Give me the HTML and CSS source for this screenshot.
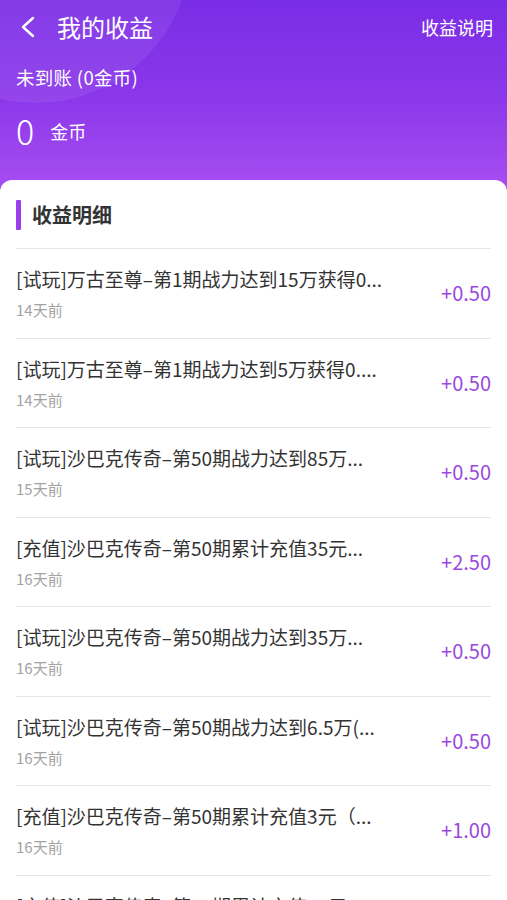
FILE: index.html
```html
<!DOCTYPE html>
<html lang="zh-CN">
<head>
    <meta charset="UTF-8">
    <meta name="viewport" content="width=device-width, initial-scale=1.0">
    <title>我的收益</title>
    <link rel="stylesheet" href="styles.css">
</head>
<body>
    <div id="header">
        <div class="bubble"></div>
        <div class="nav">
            <svg class="back" width="16" height="22" viewBox="0 0 16 22">
                <polyline points="13,2 3,11 13,20" fill="none" stroke="#fff" stroke-width="2.4" stroke-linecap="round" stroke-linejoin="round"/>
            </svg>
            <span class="nav-title">我的收益</span>
            <span class="nav-link">收益说明</span>
        </div>
        <div class="pending">未到账 (0金币)</div>
        <div class="balance">
            <span class="balance-num">0</span>
            <span class="balance-unit">金币</span>
        </div>
    </div>

    <div id="card">
        <div class="card-head">
            <span class="mark"></span>
            <span class="card-title">收益明细</span>
        </div>
        <div id="list">
            <div class="row">
                <div class="row-info">
                    <div class="row-title">[试玩]万古至尊–第1期战力达到15万获得0...</div>
                    <div class="row-time">14天前</div>
                </div>
                <div class="row-amount">+0.50</div>
            </div>
            <div class="row">
                <div class="row-info">
                    <div class="row-title">[试玩]万古至尊–第1期战力达到5万获得0....</div>
                    <div class="row-time">14天前</div>
                </div>
                <div class="row-amount">+0.50</div>
            </div>
            <div class="row">
                <div class="row-info">
                    <div class="row-title">[试玩]沙巴克传奇–第50期战力达到85万...</div>
                    <div class="row-time">15天前</div>
                </div>
                <div class="row-amount">+0.50</div>
            </div>
            <div class="row">
                <div class="row-info">
                    <div class="row-title">[充值]沙巴克传奇–第50期累计充值35元...</div>
                    <div class="row-time">16天前</div>
                </div>
                <div class="row-amount">+2.50</div>
            </div>
            <div class="row">
                <div class="row-info">
                    <div class="row-title">[试玩]沙巴克传奇–第50期战力达到35万...</div>
                    <div class="row-time">16天前</div>
                </div>
                <div class="row-amount">+0.50</div>
            </div>
            <div class="row">
                <div class="row-info">
                    <div class="row-title">[试玩]沙巴克传奇–第50期战力达到6.5万(...</div>
                    <div class="row-time">16天前</div>
                </div>
                <div class="row-amount">+0.50</div>
            </div>
            <div class="row">
                <div class="row-info">
                    <div class="row-title">[充值]沙巴克传奇–第50期累计充值3元（...</div>
                    <div class="row-time">16天前</div>
                </div>
                <div class="row-amount">+1.00</div>
            </div>
            <div class="row">
                <div class="row-info">
                    <div class="row-title">[充值]沙巴克传奇–第50期累计充值10元...</div>
                    <div class="row-time">16天前</div>
                </div>
                <div class="row-amount">+1.00</div>
            </div>
        </div>
    </div>
</body>
</html>
```

FILE: styles.css
```css
body {
    margin: 0;
    font-family: "Noto Sans CJK SC", "Noto Sans", sans-serif;
    background-color: #ffffff;
    color: #333;
    overflow: hidden;
}

#header {
    position: relative;
    overflow: hidden;
    padding: 0 14px 41px 16px;
    color: #fff;
    background: linear-gradient(180deg, #7a2de6 0%, #8b37ea 50%, #a84ff2 100%);
}

/* faint light circle in the corner */
.bubble {
    position: absolute;
    left: -119px;
    top: -207px;
    width: 310px;
    height: 310px;
    border-radius: 50%;
    background: rgba(255, 255, 255, 0.07);
}

.nav {
    position: relative;
    display: flex;
    align-items: center;
    height: 54px;
}

.back {
    margin-left: 4px;
    flex-shrink: 0;
}

.nav-title {
    margin-left: 21px;
    font-size: 24px;
    line-height: 30px;
}

.nav-link {
    margin-left: auto;
    font-size: 18px;
    line-height: 24px;
}

.pending {
    position: relative;
    margin-top: 11px;
    font-size: 18.5px;
    line-height: 24px;
    letter-spacing: 0.3px;
}

.balance {
    position: relative;
    display: flex;
    align-items: center;
    margin-top: 22px;
    height: 40px;
}

.balance-num {
    font-size: 34px;
    font-weight: 300;
    line-height: 40px;
}

.balance-unit {
    margin-left: 16px;
    font-size: 18px;
    line-height: 24px;
}

#card {
    position: relative;
    margin-top: -12px;
    background: #fff;
    border-radius: 12px 12px 0 0;
    padding: 0 16px;
}

.card-head {
    display: flex;
    align-items: center;
    padding: 20px 0 18px;
    border-bottom: 1px solid #e6e6e6;
}

.mark {
    width: 5px;
    height: 30px;
    background: #9a3ff0;
    border-radius: 1px;
}

.card-title {
    margin-left: 11px;
    font-size: 20px;
    font-weight: 700;
    line-height: 26px;
    color: #333;
}

.row {
    display: flex;
    align-items: center;
    height: 88.5px;
    border-bottom: 1px solid #e6e6e6;
}

.row-info {
    flex: 1;
    min-width: 0;
    padding-top: 1px;
}

.row-title {
    font-size: 19px;
    line-height: 24px;
    color: #333;
    white-space: nowrap;
}

.row-time {
    margin-top: 8px;
    font-size: 15px;
    line-height: 21px;
    color: #a3a3a3;
}

.row-amount {
    flex-shrink: 0;
    font-size: 20px;
    font-weight: 400;
    line-height: 24px;
    color: #9a47e0;
}
```
